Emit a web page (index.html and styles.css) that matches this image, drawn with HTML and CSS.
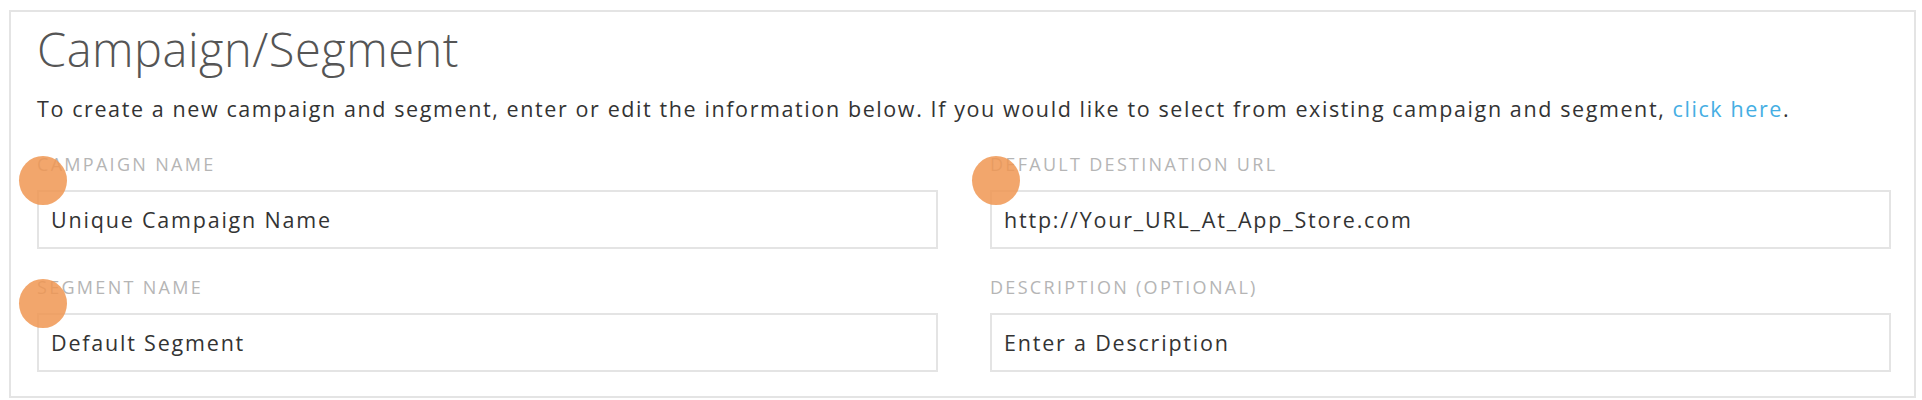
FILE: index.html
```html
<!DOCTYPE html>
<html lang="en">
<head>
<meta charset="utf-8">
<title>Campaign/Segment</title>
<link rel="stylesheet" href="styles.css">
</head>
<body>
<section class="card">
  <h1 class="title">Campaign/Segment</h1>
  <p class="intro">To create a new campaign and segment, enter or edit the information below. If you would like to select from existing campaign and segment, <a class="link" href="#">click here</a>.</p>
  <div class="fields">
    <div class="field">
      <label class="label">CAMPAIGN NAME</label>
      <input class="input" type="text" value="Unique Campaign Name">
      <span class="dot"></span>
    </div>
    <div class="field">
      <label class="label">DEFAULT DESTINATION URL</label>
      <input class="input" type="text" value="http://Your_URL_At_App_Store.com">
      <span class="dot"></span>
    </div>
    <div class="field">
      <label class="label">SEGMENT NAME</label>
      <input class="input" type="text" value="Default Segment">
      <span class="dot"></span>
    </div>
    <div class="field">
      <label class="label">DESCRIPTION (OPTIONAL)</label>
      <input class="input" type="text" value="Enter a Description">
    </div>
  </div>
</section>
</body>
</html>
```
FILE: styles.css
```css
html, body {
  margin: 0;
  padding: 0;
  background: #ffffff;
}

body {
  font-family: "Open Sans", "Liberation Sans", sans-serif;
  color: #333333;
}

.card {
  box-sizing: border-box;
  margin: 10px 0 0 9px;
  width: 1907px;
  height: 388px;
  border: 2px solid #e4e4e4;
  padding: 7px 23px 0 26px;
}

.title {
  margin: 0;
  font-size: 47px;
  font-weight: 300;
  line-height: 60px;
  letter-spacing: 0.5px;
  color: #555555;
}

.intro {
  margin: 15px 0 0 0;
  font-size: 21.5px;
  line-height: 30px;
  letter-spacing: 1.6px;
  color: #333333;
}

.link {
  color: #45aee3;
  text-decoration: none;
}

.fields {
  margin-top: 30px;
  display: grid;
  grid-template-columns: 1fr 1fr;
  column-gap: 52px;
  row-gap: 28px;
}

.field {
  position: relative;
  display: flex;
  flex-direction: column;
}

.label {
  font-size: 18px;
  line-height: 20px;
  letter-spacing: 2.3px;
  color: #b5b5b5;
  margin-bottom: 16px;
}

.input {
  box-sizing: border-box;
  height: 59px;
  margin: 0;
  border: 2px solid #e4e4e4;
  padding: 0 12px;
  font-family: "Open Sans", "Liberation Sans", sans-serif;
  font-size: 21.5px;
  letter-spacing: 1.8px;
  color: #333333;
  background: #ffffff;
  outline: none;
}

.dot {
  position: absolute;
  left: -18px;
  top: 2px;
  width: 48px;
  height: 49px;
  border-radius: 50%;
  background: rgba(240, 150, 82, 0.85);
}
```
